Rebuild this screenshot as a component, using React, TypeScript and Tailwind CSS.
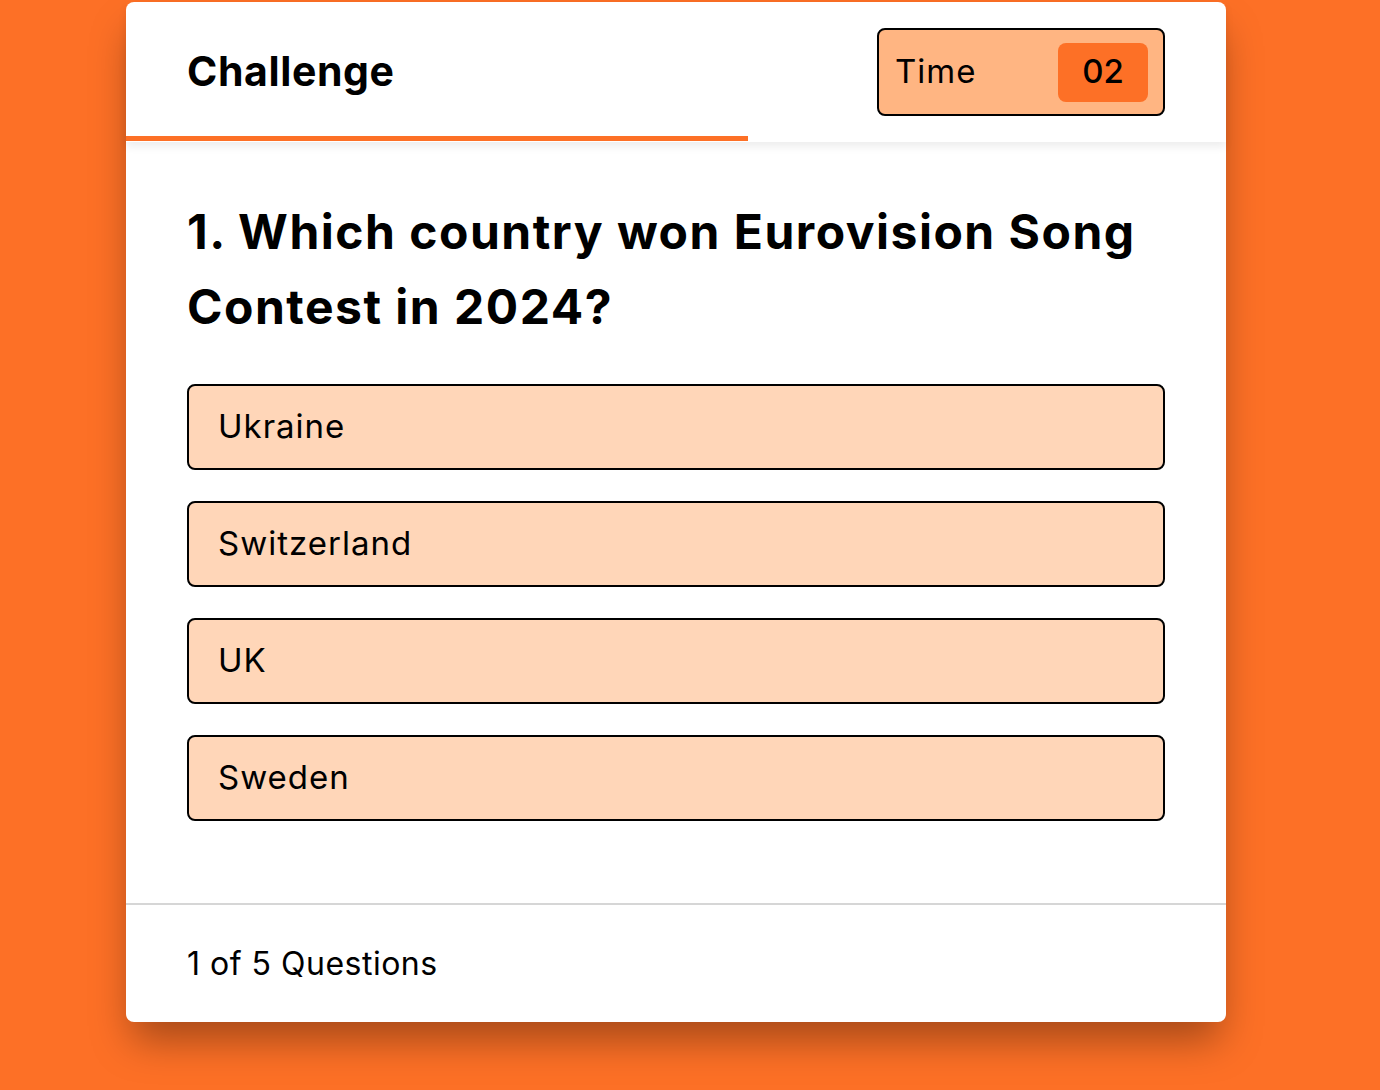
import React from "react";

const options = ["Ukraine", "Switzerland", "UK", "Sweden"];

const App = () => {
  return (
    <div className="min-h-[1090px] w-full bg-[#fd7026] font-['Inter',sans-serif] text-black">
      <div className="pl-[126px] pt-[2px]">
        <div className="w-[1100px] rounded-lg bg-white shadow-[0_24px_40px_-6px_rgba(0,0,0,0.35)]">
          {/* header */}
          <div className="relative z-10 h-[140px] shadow-[0_5px_8px_rgba(0,0,0,0.07)]">
            <div className="flex h-full items-center justify-between px-[61px]">
              <h2 className="text-[41px] font-bold tracking-[0.6px]">Challenge</h2>
              <div className="flex h-[88px] w-[288px] items-center justify-between rounded-lg border-2 border-black bg-[#ffb582] pl-[16px] pr-[15px]">
                <span className="text-[33px] tracking-[1px]">Time</span>
                <span className="flex h-[59px] w-[90px] items-center justify-center rounded-lg bg-[#fd7026] text-[33px] font-medium">
                  02
                </span>
              </div>
            </div>
            <div className="absolute bottom-[1px] left-0 h-[5px] w-[622px] bg-[#fd7026]" />
          </div>

          {/* body */}
          <div className="px-[61px] pb-[82px] pt-[52px]">
            <h1 className="text-[48px] font-bold leading-[75px] tracking-[1.5px]">
              1. Which country won Eurovision Song Contest in 2024?
            </h1>
            <div className="mt-[40px] flex flex-col gap-[31px]">
              {options.map((o) => (
                <button
                  key={o}
                  className="flex h-[86px] items-center rounded-lg border-2 border-black bg-[#ffd6b8] px-[29px] text-left text-[33px] tracking-[1px]"
                >
                  {o}
                </button>
              ))}
            </div>
          </div>

          {/* footer */}
          <div className="flex h-[119px] items-center border-t-2 border-[#d6d6d6] px-[61px]">
            <span className="text-[32px] tracking-[0.5px]">1 of 5 Questions</span>
          </div>
        </div>
      </div>
    </div>
  );
};

export default App;
